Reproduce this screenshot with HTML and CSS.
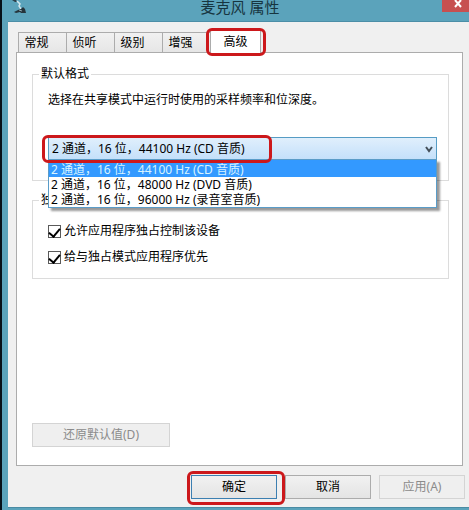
FILE: index.html
```html
<!DOCTYPE html>
<html lang="zh-CN">
<head>
    <meta charset="UTF-8">
    <meta name="viewport" content="width=device-width, initial-scale=1.0">
    <title>麦克风 属性</title>
    <link rel="stylesheet" href="styles.css">
</head>
<body>
    <div class="window">
        <header class="titlebar">
            <svg class="mic-icon" viewBox="0 0 16 15" width="16" height="15" aria-hidden="true">
                <path d="M0 0h4l1 2-2 0z" fill="#2b3f48"/>
                <path d="M5 1l3 3-1 2 2 3" fill="none" stroke="#d5e8ee" stroke-width="1.5"/>
                <path d="M2 12l4-2 3-1 2-2 2 2 1 4H9l-1-1-4 1z" fill="#26343b"/>
                <path d="M7 10l3 1" stroke="#8fa9b3"/>
            </svg>
            <h1>麦克风 属性</h1>
            <button type="button" class="close" aria-label="关闭">
                <svg viewBox="0 0 8 8" width="8" height="8"><path d="M1 0l6 7M7 0L1 7" stroke="#fff" stroke-width="2"/></svg>
            </button>
        </header>

        <main class="client">
            <div class="tabs" role="tablist">
                <button type="button" role="tab">常规</button>
                <button type="button" role="tab">侦听</button>
                <button type="button" role="tab">级别</button>
                <button type="button" role="tab">增强</button>
                <button type="button" role="tab" class="active mark mark-tab" aria-selected="true">高级</button>
            </div>

            <div class="panel" role="tabpanel">
                <fieldset class="group format">
                    <legend>默认格式</legend>
                    <label for="format">选择在共享模式中运行时使用的采样频率和位深度。</label>
                    <div class="combo mark mark-combo">
                        <select id="format">
                            <option>2 通道，16 位，44100 Hz (CD 音质)</option>
                            <option>2 通道，16 位，48000 Hz (DVD 音质)</option>
                            <option>2 通道，16 位，96000 Hz (录音室音质)</option>
                        </select>
                        <svg class="arrow" viewBox="0 0 8 7" width="8" height="7" aria-hidden="true"><path d="M1 1l3 4 3-4" fill="none" stroke="#444f59" stroke-width="2"/></svg>
                        <ul class="options" role="listbox" aria-label="默认格式">
                            <li role="option" class="selected" aria-selected="true">2 通道，16 位，44100 Hz (CD 音质)</li>
                            <li role="option">2 通道，16 位，48000 Hz (DVD 音质)</li>
                            <li role="option">2 通道，16 位，96000 Hz (录音室音质)</li>
                        </ul>
                    </div>
                </fieldset>

                <fieldset class="group exclusive">
                    <legend>独占模式</legend>
                    <label class="check"><input type="checkbox" checked>允许应用程序独占控制该设备</label>
                    <label class="check"><input type="checkbox" checked>给与独占模式应用程序优先</label>
                </fieldset>

                <button type="button" class="btn restore" disabled>还原默认值(D)</button>
            </div>

            <footer class="actions">
                <button type="button" class="btn ok mark mark-ok">确定</button>
                <button type="button" class="btn">取消</button>
                <button type="button" class="btn" disabled>应用(A)</button>
            </footer>
        </main>
    </div>
</body>
</html>
```
FILE: styles.css
```css
* {
    box-sizing: border-box;
}

body {
    margin: 0;
    background-color: #071018;
    color: #000;
    font: 12px/16px "Noto Sans", "Noto Sans CJK SC", sans-serif;
}

button,
select {
    font: inherit;
    color: inherit;
}

.window {
    display: flex;
    flex-direction: column;
    min-height: 100vh;
    margin-left: 2px;
    padding: 0 0 2px 6px;
    background-color: #5ba3bb;
}

.titlebar {
    display: flex;
    justify-content: space-between;
    align-items: flex-start;
    height: 22px;
    border-bottom: 1px solid #4b8ea7;
}

.mic-icon {
    margin-left: 4px;
}

.titlebar h1 {
    margin: 0 0 0 10px;
    color: #173540;
    font-size: 15px;
    font-weight: normal;
    line-height: 14px;
}

.close {
    display: flex;
    justify-content: center;
    width: 27px;
    height: 12px;
    padding: 0 0 0 5px;
    border: none;
    background-color: #c75050;
}

.client {
    flex: 1;
    display: flex;
    flex-direction: column;
    padding: 10px 6px 8px 8px;
    border-bottom: 1px solid #4a8ba4;
    background-color: #f0f0f0;
}

.tabs {
    display: flex;
    padding-left: 2px;
}

.tabs button {
    width: 48px;
    height: 20px;
    padding: 0 12px 0 0;
    border: 1px solid #acacac;
    border-width: 1px 0 0 1px;
    background: linear-gradient(#f1f1f1, #e6e6e6);
}

.tabs .active {
    width: 51px;
    height: 24px;
    margin: -3px 0 -1px;
    padding: 0;
    border-right-width: 1px;
    background: #fff;
    z-index: 1;
}

/* red frames around the things to click */
.mark {
    position: relative;
}

.mark::after {
    content: "";
    position: absolute;
    border: 3px solid #cc181b;
    border-radius: 6px;
    pointer-events: none;
    z-index: 3;
}

.mark-tab::after {
    inset: -2px -6px -3px -5px;
}

.mark-combo::after {
    inset: -2px 165px -3px -6px;
}

.mark-ok::after {
    inset: -5px -9px -7px -5px;
}

.panel {
    flex: 1;
    display: flex;
    flex-direction: column;
    padding: 13px 13px 18px 15px;
    border: 1px solid #acacac;
    background-color: #fff;
}

.group {
    min-width: 0;
    margin: 0;
    padding: 0 11px 0 15px;
    border: 1px solid #dcdcdc;
}

.group legend {
    margin-left: -9px;
    padding: 0 2px;
}

.format {
    height: 115px;
}

.format label {
    display: block;
    margin-top: 10px;
}

.combo {
    margin-top: 29px;
}

.combo select {
    appearance: none;
    display: block;
    width: 100%;
    height: 23px;
    padding: 0 3px;
    border: 1px solid #569cc4;
    border-radius: 0;
    background: linear-gradient(#e0effc, #c4e0fa);
}

.arrow {
    position: absolute;
    top: 9px;
    right: 4px;
}

.options {
    position: absolute;
    top: 22px;
    left: 0;
    right: 0;
    margin: 0;
    padding: 0;
    border: 1px solid #5a9cc8;
    background-color: #fff;
    box-shadow: 3px 3px 2px rgba(0, 0, 0, 0.4);
    list-style: none;
    line-height: 15px;
    z-index: 2;
}

.options li {
    padding: 0 2px;
}

.options .selected {
    padding-top: 2px;
    background-color: #3399ff;
    color: #d8f4ff;
}

.exclusive {
    height: 87px;
    margin-top: 11px;
}

.check {
    display: flex;
    align-items: center;
    gap: 3px;
    margin-top: 15px;
}

.check + .check {
    margin-top: 10px;
}

.check input {
    appearance: none;
    display: grid;
    place-items: start center;
    width: 13px;
    height: 13px;
    margin: 0;
    border: 1px solid #5a5a5a;
    background-color: #fff;
}

.check input:checked::after {
    content: "";
    width: 5px;
    height: 9px;
    border: solid #000;
    border-width: 0 2px 2px 0;
    transform: rotate(40deg);
}

.btn {
    width: 86px;
    height: 24px;
    padding: 0;
    border: 1px solid #acacac;
    background: linear-gradient(#f1f1f1, #e4e4e4);
}

.btn:disabled {
    border-color: #d4d4d4;
    background: #efefef;
    color: #8b8b8b;
}

.restore {
    width: 138px;
    margin-top: auto;
}

.ok {
    border-color: #3c7fb1;
}

.actions {
    display: flex;
    justify-content: flex-end;
    gap: 8px;
    margin: 9px -2px 0 0;
}
```
